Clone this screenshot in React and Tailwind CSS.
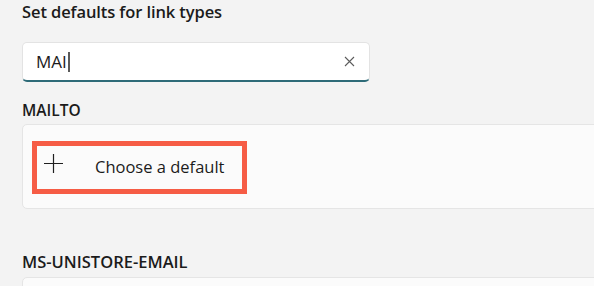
export default function App() {
    return (
        <div className="h-[286px] w-[594px] overflow-hidden bg-[#f3f3f3] pl-[22px] text-[#1b1b1b]" style={{ fontFamily: '"Open Sans", "Noto Sans", sans-serif' }}>
            <h1 className="text-[16.5px] font-semibold leading-[23px] tracking-[-0.1px]">Set defaults for link types</h1>

            <div className="mt-[19px] flex h-[40px] w-[348px] items-center rounded-[5px] border border-[#e3e3e3] border-b-2 border-b-[#2e6b78] bg-white pl-[13px] pr-[13px]">
                <span className="text-[17px] leading-none">MAI</span>
                <span className="ml-[1px] h-[20px] w-[2px] bg-[#5a5a5a]" />
                <span className="flex-1" />
                <svg width="11" height="11" viewBox="0 0 11 11" className="mr-[1px]">
                    <path d="M1 1 L10 10 M10 1 L1 10" stroke="#5c5c5c" strokeWidth="1.1" fill="none" />
                </svg>
            </div>

            <div className="mt-[18px] text-[15.5px] font-semibold leading-[20px]">MAILTO</div>

            <div className="mt-[4px] -mr-[10px] h-[85px] rounded-[5px] border border-[#e5e5e5] bg-[#fbfbfb] pl-[9px] pt-[16px]">
                <div className="flex h-[53px] w-[215px] items-center border-[5px] border-[#f65c45] bg-[#fbfbfb]">
                    <svg width="21" height="21" viewBox="0 0 21 21" className="ml-[6px] -mt-[9px]">
                        <path d="M10.5 1 V20 M1 10.5 H20" stroke="#1f1f1f" strokeWidth="1.2" fill="none" />
                    </svg>
                    <span className="ml-[31px] text-[16.5px] leading-none">Choose a default</span>
                </div>
            </div>

            <div className="mt-[42px] text-[16.5px] font-semibold leading-[22px]">MS-UNISTORE-EMAIL</div>

            <div className="mt-[4px] -mr-[10px] h-[60px] rounded-[5px] border border-[#e5e5e5] bg-[#fbfbfb]" />
        </div>
    )
}
